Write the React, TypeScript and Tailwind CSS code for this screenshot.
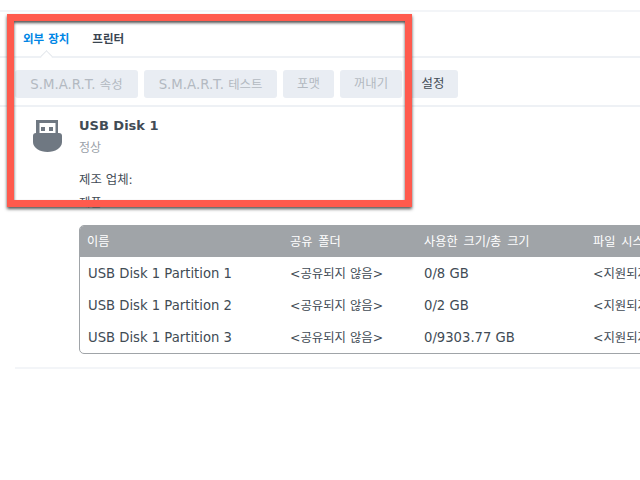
const fontStack = { fontFamily: '"DejaVu Sans", "Noto Sans CJK KR", sans-serif' }

const actions = [
  { latin: 'S.M.A.R.T. ', label: '속성', width: 'w-[123px]', disabled: true },
  { latin: 'S.M.A.R.T. ', label: '테스트', width: 'w-[133px]', disabled: true },
  { latin: '', label: '포맷', width: 'w-[51px]', disabled: true },
  { latin: '', label: '꺼내기', width: 'w-[62px]', disabled: true },
  { latin: '', label: '설정', width: 'w-[50px]', disabled: false },
]

const partitions = [
  { name: 'USB Disk 1 Partition 1', size: '0/8 GB' },
  { name: 'USB Disk 1 Partition 2', size: '0/2 GB' },
  { name: 'USB Disk 1 Partition 3', size: '0/9303.77 GB' },
]

const UsbIcon = () => (
  <svg width="29" height="32" viewBox="0 0 29 32" className="mt-[2px] shrink-0">
    <path d="M3 0h22v14H3z M6.500 3v10h16V3z" fill="#6f7882" fillRule="evenodd" />
    <path d="M8 7h4v4H8zM16 7h4v4h-4z" fill="#6f7882" />
    <path d="M3 13h23a3 3 0 0 1 3 3v6c0 6-7 10-14.500 10S0 28 0 22v-6a3 3 0 0 1 3-3z" fill="#6f7882" />
  </svg>
)

export default function App() {
  return (
    <div className="relative w-[640px] h-[480px] overflow-hidden bg-white" style={fontStack}>
      <div className="h-[56px] pt-[10px]">
        <div className="h-[2px] bg-[#f3f5f8]" />
        <div className="flex gap-[23px] pl-[23px] pt-[19px] text-[11.500px] font-bold leading-[16px]">
          <span className="text-[#0086e5]">외부 장치</span>
          <span className="text-[#3a4550]">프린터</span>
        </div>
      </div>
      <div className="relative h-[2px] bg-[#eef1f5]">
        <div className="absolute left-[42px] top-[-4px] size-[9px] rotate-45 border-l border-t border-[#e3e7ec] bg-white" />
      </div>

      <div className="flex gap-[6px] pl-[15px] pt-[12px] pb-[7px]">
        {actions.map((a) => (
          <button
            key={a.label}
            className={`${a.width} h-[28px] rounded-[3px] bg-[#e9edf3] text-[12.400px] pt-[1px] whitespace-pre ${
              a.disabled ? 'text-[#b3b9c1]' : 'text-[#414b55]'
            }`}
          >
            {a.latin && <span className="text-[13.300px]">{a.latin}</span>}
            {a.label}
          </button>
        ))}
      </div>
      <div className="h-[2px] bg-[#eef1f5]" />

      <div className="flex pl-[33px] pt-[11px]">
        <UsbIcon />
        <div className="pl-[17px]">
          <div className="text-[13px] font-bold leading-[16px] text-[#414b55]">USB Disk 1</div>
          <div className="mt-[6px] text-[12px] leading-[16px] text-[#9aa1a9]">정상</div>
          <div className="mt-[16px] text-[12.400px] leading-[16px] text-[#414b55]">제조 업체:</div>
          <div className="mt-[7px] text-[12.400px] leading-[16px] text-[#414b55]">제품:</div>
        </div>
      </div>

      <div className="ml-[79px] mt-[14px] w-[640px] rounded-[5px] border border-[#a0a4a8] overflow-hidden">
        <div className="flex h-[31px] items-center pt-[1px] bg-[#a0a4a8] text-[12.200px] text-white [word-spacing:2px]">
          <div className="w-[204px] pl-[7px]">이름</div>
          <div className="w-[134px] pl-[6px]">공유 폴더</div>
          <div className="w-[169px] pl-[6px]">사용한 크기/총 크기</div>
          <div className="pl-[6px] whitespace-nowrap">파일 시스템</div>
        </div>
        {partitions.map((p) => (
          <div key={p.name} className="flex h-[32px] items-center pt-[2px] text-[13.200px] text-[#414b55]">
            <div className="w-[204px] pl-[8px] whitespace-nowrap">{p.name}</div>
            <div className="w-[134px] pl-[6px] text-[12.400px] whitespace-nowrap">&lt;공유되지 않음&gt;</div>
            <div className="w-[169px] pl-[6px] whitespace-nowrap">{p.size}</div>
            <div className="pl-[6px] text-[12.400px] whitespace-nowrap">&lt;지원되지 않음&gt;</div>
          </div>
        ))}
      </div>
      <div className="ml-[15px] mt-[13px] h-[2px] bg-[#f3f5f8]" />

      {/* annotation frame drawn over the screenshot */}
      <div className="absolute left-[7px] top-[14px] w-[405px] h-[193px] border-[7px] border-[#ff5a4d] shadow-[0_2px_3px_#555,inset_0_2px_3px_#555]" />
    </div>
  )
}
